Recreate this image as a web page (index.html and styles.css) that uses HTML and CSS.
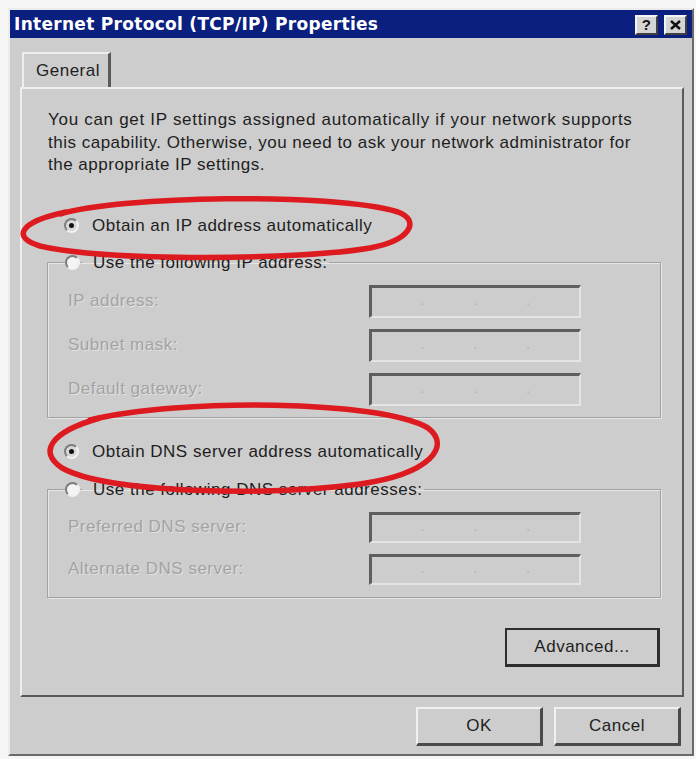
FILE: index.html
```html
<!DOCTYPE html>
<html>
<head>
    <link rel="stylesheet" href="styles.css">
</head>
<body>
<div class="window">
    <div class="titlebar">
        <span class="title">Internet Protocol (TCP/IP) Properties</span>
        <div class="title-buttons">
            <span class="title-btn help">?</span>
            <span class="title-btn">
                <svg width="11" height="10" viewBox="0 0 11 10"><path d="M1 1 L10 9 M10 1 L1 9" stroke="#111" stroke-width="2.4"/></svg>
            </span>
        </div>
    </div>

    <div class="tabs">
        <div class="tab">General</div>
    </div>

    <div class="panel">
        <p class="intro">
            <span class="line line-1">You can get IP settings assigned automatically if your network supports</span>
            <span class="line">this capability. Otherwise, you need to ask your network administrator for</span>
            <span class="line">the appropriate IP settings.</span>
        </p>

        <div class="radio-row"><span class="radio checked"></span>Obtain an IP address automatically</div>
        <fieldset class="group">
            <legend class="radio-row"><span class="radio"></span>Use the following IP address:</legend>
            <div class="field"><span class="field-label">IP address:</span><span class="ip-box"><i>.</i><i>.</i><i>.</i></span></div>
            <div class="field"><span class="field-label">Subnet mask:</span><span class="ip-box"><i>.</i><i>.</i><i>.</i></span></div>
            <div class="field"><span class="field-label">Default gateway:</span><span class="ip-box"><i>.</i><i>.</i><i>.</i></span></div>
        </fieldset>

        <div class="radio-row dns-auto"><span class="radio checked"></span>Obtain DNS server address automatically</div>
        <fieldset class="group dns-group">
            <legend class="radio-row"><span class="radio"></span>Use the following DNS server addresses:</legend>
            <div class="field"><span class="field-label">Preferred DNS server:</span><span class="ip-box"><i>.</i><i>.</i><i>.</i></span></div>
            <div class="field"><span class="field-label">Alternate DNS server:</span><span class="ip-box"><i>.</i><i>.</i><i>.</i></span></div>
        </fieldset>

        <div class="advanced-row">
            <button class="btn btn-default">Advanced...</button>
        </div>
    </div>

    <div class="footer">
        <button class="btn">OK</button>
        <button class="btn">Cancel</button>
    </div>
</div>

<!-- red marker rings drawn over the dialog -->
<svg class="marks" width="696" height="759" viewBox="0 0 696 759">
    <path d="M60 214 C120 196 330 192 398 212 C420 220 412 240 370 248 C300 260 110 262 40 246 C12 238 18 222 66 212"
          fill="none" stroke="#dd1a1f" stroke-width="5.5" stroke-linecap="round"/>
    <path d="M90 420 C180 398 380 400 428 428 C452 446 430 474 360 484 C270 496 110 494 62 468 C38 452 50 432 100 418"
          fill="none" stroke="#dd1a1f" stroke-width="5.5" stroke-linecap="round"/>
</svg>
</body>
</html>
```

FILE: styles.css
```css
body {
    margin: 0;
    background-color: #f6f6f6;
    font-family: "Liberation Sans", Arial, sans-serif;
    font-size: 17px;
    letter-spacing: 0.5px;
    color: #1e1e1e;
}

.window {
    box-sizing: border-box;
    width: 686px;
    height: 748px;
    margin: 8px 0 0 8px;
    background-color: #cdcdcd;
    border: 2px solid;
    border-color: #ececec #6a6a6a #6a6a6a #ececec;
}

.titlebar {
    height: 28px;
    background-color: #0b1f7e;
    display: flex;
    align-items: center;
    justify-content: space-between;
    padding: 0 5px 0 4px;
}

.title {
    color: #fff;
    font-family: "DejaVu Sans", Verdana, sans-serif;
    font-weight: bold;
    font-size: 17px;
    letter-spacing: 0.3px;
}

.title-buttons {
    display: flex;
    gap: 6px;
    padding-top: 1px;
}

.title-btn {
    box-sizing: border-box;
    width: 23px;
    height: 20px;
    background-color: #d4d4d4;
    border: 2px solid;
    border-color: #f4f4f4 #404040 #404040 #f4f4f4;
    display: flex;
    align-items: center;
    justify-content: center;
    font-weight: bold;
    font-size: 15px;
    color: #111;
}

.tabs {
    padding: 14px 0 0 12px;
    display: flex;
}

.tab {
    box-sizing: border-box;
    width: 89px;
    height: 35px;
    padding: 7px 0 0 12px;
    border-top: 2px solid #eeeeee;
    border-left: 2px solid #eeeeee;
    border-right: 3px solid #5a5a5a;
    border-top-left-radius: 2px;
}

.panel {
    box-sizing: border-box;
    height: 610px;
    margin: 0 8px 0 10px;
    padding: 20px 21px 0 25px;
    border: 2px solid;
    border-color: #eeeeee #5a5a5a #5a5a5a #eeeeee;
}

.intro {
    margin: 0 0 38px 1px;
    line-height: 22.5px;
    white-space: nowrap;
}

.intro .line {
    display: block;
}

.line-1 {
    letter-spacing: 0.7px;
}

.radio-row {
    display: flex;
    align-items: center;
    gap: 13px;
    height: 22px;
    padding-left: 17px;
}

.radio {
    box-sizing: border-box;
    width: 15px;
    height: 15px;
    border-radius: 50%;
    border: 2px solid;
    border-color: #7c7c7c #f2f2f2 #f2f2f2 #7c7c7c;
    background-color: #f4f4f4;
    display: flex;
    align-items: center;
    justify-content: center;
}

.radio.checked {
    background-color: #d8d8d8;
}

.radio.checked::after {
    content: "";
    width: 5px;
    height: 5px;
    border-radius: 50%;
    background-color: #111;
}

.group {
    margin: 15px 0 0 0;
    padding: 0 0 11px 20px;
    border: 1px solid #a2a2a2;
    box-shadow: inset 1px 1px 0 #e6e6e6, 1px 1px 0 #e6e6e6;
    display: flex;
    flex-direction: column;
    gap: 11px;
}

.group legend {
    margin-left: 14px;
    padding: 0 2px 0 0;
    margin-bottom: 11px;
}

.group legend .radio {
    margin-left: -17px;
}

.field {
    display: flex;
    align-items: center;
    justify-content: space-between;
    padding-right: 79px;
}

.field-label {
    color: #a3a3a3;
    text-shadow: 1px 1px 0 #e2e2e2;
}

.ip-box {
    box-sizing: border-box;
    width: 212px;
    height: 33px;
    border-top: 3px solid #5e5e5e;
    border-left: 3px solid #5e5e5e;
    border-right: 2px solid #e4e4e4;
    border-bottom: 2px solid #e4e4e4;
    display: flex;
    justify-content: space-evenly;
    align-items: center;
    padding-bottom: 4px;
}

.ip-box i {
    font-style: normal;
    color: #b2b2b2;
    font-size: 15px;
}

.dns-auto {
    margin-top: 23px;
}

.dns-group {
    margin-top: 16px;
    padding-bottom: 12px;
}

.dns-group .ip-box {
    height: 31px;
}

.advanced-row {
    display: flex;
    justify-content: flex-end;
    margin-top: 30px;
    padding-right: 1px;
}

.btn {
    box-sizing: border-box;
    height: 39px;
    background-color: #cdcdcd;
    font-family: "Liberation Sans", Arial, sans-serif;
    font-size: 17px;
    letter-spacing: 0.5px;
    color: #1e1e1e;
    border: 2px solid;
    border-color: #f0f0f0 #4a4a4a #4a4a4a #f0f0f0;
    border-right-width: 3px;
    border-bottom-width: 3px;
    padding: 0;
}

.btn-default {
    width: 155px;
    border-color: #2e2e2e;
}

.footer {
    display: flex;
    justify-content: flex-end;
    gap: 11px;
    padding: 10px 11px 0 0;
}

.footer .btn {
    width: 127px;
}

.marks {
    position: absolute;
    top: 0;
    left: 0;
    pointer-events: none;
}
```
